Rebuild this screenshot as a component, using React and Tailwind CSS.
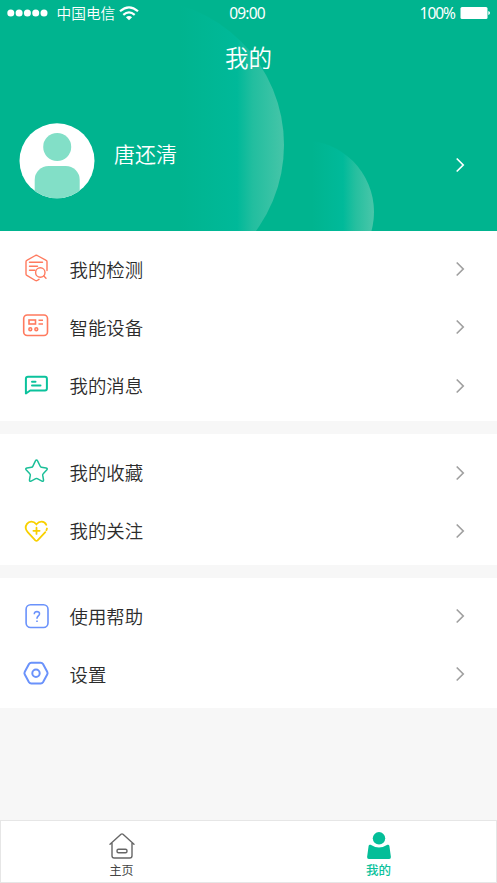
import React from "react";

const Chevron = ({ className }) => (
  <svg className={className} width="9" height="16" viewBox="0 0 9 16" fill="none" stroke="currentColor" strokeWidth="1.7">
    <path d="M.7 1.500 7.200 8 .7 14.500" />
  </svg>
);

const ReportIcon = () => (
  <svg width="28" height="30" viewBox="0 0 28 30" fill="none" stroke="#ff7a5e" strokeWidth="1.4" strokeLinecap="round" strokeLinejoin="round">
    <path d="M25 16.500V7.700q0-1-.8-1.400L15.200 1.500q-.9-.4-1.800 0L4.800 6.300Q4 6.700 4 7.700V20q0 1 .8 1.400l8.600 5.100q.9.500 1.800 0l1.800-1.200" />
    <path d="M7.500 8.200h13M7.500 12.200h8M7.500 16.200h5.500" />
    <circle cx="18.300" cy="18.500" r="4.700" />
    <path d="m21.800 22 2.200 2.200" />
  </svg>
);

const DeviceIcon = () => (
  <svg width="28" height="30" viewBox="0 0 28 30" fill="none" stroke="#ff7a5e" strokeWidth="1.600">
    <rect x="1.700" y="3" width="23.800" height="20.500" rx="3.500" />
    <rect x="7" y="8" width="6.500" height="4" />
    <path d="M16.500 8.300h4.500M16.500 12h4.500" />
    <circle cx="8.300" cy="17.200" r="1.400" />
    <circle cx="14.300" cy="17.200" r="1.400" />
  </svg>
);

const MessageIcon = () => (
  <svg width="28" height="30" viewBox="0 0 28 30" fill="none" stroke="#0bc29c" strokeWidth="2" strokeLinecap="round" strokeLinejoin="round">
    <path d="M6 5.800H23q1.900 0 1.900 1.900v9.900q0 1.900-1.900 1.900H8.200L3.900 22.500V7.700q0-1.900 2.100-1.900Z" />
    <path d="M10 10.700h3.500M10 14.500h8.500" />
  </svg>
);

const StarIcon = () => (
  <svg width="28" height="30" viewBox="0 0 28 30" fill="none" stroke="#1bbf98" strokeWidth="1.500" strokeLinejoin="round">
    <path d="M13.300 3.100q1.200-2 2.400 0l2.500 5.200q.4.800 1.200.9l4.700.8q2 .5.600 2l-3.500 3.700q-.6.600-.5 1.500l.8 4.700q.2 1.900-1.600 1.200l-4.600-2.400q-.8-.4-1.600 0l-4.600 2.400q-1.800.7-1.600-1.200l.8-4.700q.1-.9-.5-1.500L4.300 12q-1.400-1.500.6-2l4.700-.8q.8-.1 1.200-.9Z" />
  </svg>
);

const HeartIcon = () => (
  <svg width="28" height="30" viewBox="0 0 28 30" fill="none" stroke="#f8d000" strokeWidth="1.800" strokeLinecap="round">
    <path d="M24.300 8.800C22.300 4.700 17.300 4.800 14.500 8.300 11.300 4.900 7.200 4.900 5 7.900 2.900 10.900 3.700 13.900 5.700 16.100l7.600 8.300q1.200 1 2.300 0l7.700-8.200M24.400 14.200l.6-1.700M14.500 11.700v6.200M11.400 14.800h6.200" />
  </svg>
);

const HelpIcon = () => (
  <svg width="28" height="30" viewBox="0 0 28 30" fill="none" stroke="#6a92fb" strokeWidth="1.600">
    <rect x="4.100" y="3.800" width="21.900" height="22.700" rx="4.500" />
    <path d="M12.300 13.200C12.100 9.600 17.800 9.900 17.500 13c-.2 1.800-2.500 2.200-2.500 4.300v.4M15 19.500v1.600" />
  </svg>
);

const SettingsIcon = () => (
  <svg width="28" height="30" viewBox="0 0 28 30" fill="none" stroke="#6a92fb" strokeWidth="2" strokeLinejoin="round">
    <path d="M9.300 3.800h9.400q1.500 0 2.300 1.300l4.200 7.700q.8 1.400 0 2.800l-4.200 7.700q-.8 1.300-2.300 1.300H9.300q-1.500 0-2.300-1.300l-4.200-7.700q-.8-1.400 0-2.800l4.200-7.700q.8-1.300 2.300-1.300Z" />
    <circle cx="14" cy="14.200" r="3.700" />
  </svg>
);

const Row = ({ icon, label }) => (
  <div className="flex h-[58.300px] items-center pl-[22px] pr-[32px]">
    {icon}
    <span className="ml-[19.500px] flex-1 pt-px text-[18.400px] leading-[28px] font-[350] text-[#2b2b2b]">{label}</span>
    <Chevron className="text-[#a0a0a0]" />
  </div>
);

const StatusBar = () => (
  <div className="grid h-[26px] grid-cols-3 items-center text-[15.500px] leading-[26px]">
    <div className="flex items-center pl-[7px]">
      <svg width="42" height="8" viewBox="0 0 42 8" fill="white">
        <circle cx="3.800" cy="4" r="3.500" />
        <circle cx="12.100" cy="4" r="3.500" />
        <circle cx="20.400" cy="4" r="3.500" />
        <circle cx="28.700" cy="4" r="3.500" />
        <circle cx="37" cy="4" r="3.500" />
      </svg>
      <span className="ml-[7.500px] whitespace-nowrap text-[14.700px] font-[350]">中国电信</span>
      <svg className="ml-1 shrink-0" width="20" height="15" viewBox="0 0 20 15" fill="none" stroke="white" strokeWidth="2.200">
        <path d="M1 5.300Q10-2.700 19 5.300M4.300 8.800q5.700-5 11.400 0" />
        <path d="M6.900 11.200q3.100-2.500 6.200 0L10 14.300Z" fill="white" stroke="none" />
      </svg>
    </div>
    <span className="pr-[3px] text-center tracking-[-0.800px]">09:00</span>
    <div className="flex items-center justify-end pr-[6px]">
      <span className="tracking-[-1px]">100%</span>
      <svg className="ml-[5px]" width="31" height="12" viewBox="0 0 31 12" fill="white">
        <rect x="0.500" y="0" width="27" height="12" rx="1.500" />
        <path d="M28.300 4q1.700.3 1.700 2t-1.700 2Z" />
      </svg>
    </div>
  </div>
);

const Header = () => (
  <header className="relative h-[231px] overflow-hidden bg-[#00b48f] text-white">
    <svg className="absolute inset-0" width="497" height="231" viewBox="0 0 497 231">
      <defs>
        <linearGradient id="big" gradientUnits="userSpaceOnUse" x1="180" x2="284" y1="0" y2="0">
          <stop offset="0" stopColor="#00b999" stopOpacity="0" />
          <stop offset="0.550" stopColor="#00b999" />
          <stop offset="0.700" stopColor="#22be9f" />
          <stop offset="1" stopColor="#46c5a8" />
        </linearGradient>
        <linearGradient id="small" gradientUnits="userSpaceOnUse" x1="312" x2="374" y1="0" y2="0">
          <stop offset="0" stopColor="#00ba9a" stopOpacity="0" />
          <stop offset="0.500" stopColor="#00ba9a" />
          <stop offset="0.700" stopColor="#25bf9f" />
          <stop offset="1" stopColor="#49c6a9" />
        </linearGradient>
      </defs>
      <circle cx="138" cy="145" r="146" fill="url(#big)" />
      <circle cx="302" cy="212" r="72" fill="url(#small)" />
    </svg>
    <div className="relative">
      <StatusBar />
      <h1 className="mt-[14px] text-center text-[23.500px] leading-[36px] font-[350]">我的</h1>
      <div className="mt-[47px] flex pl-[19px] pr-[32px]">
        <svg width="76" height="76" viewBox="0 0 76 76">
          <clipPath id="avatar">
            <circle cx="38" cy="37.800" r="37.500" />
          </clipPath>
          <g clipPath="url(#avatar)">
            <rect width="76" height="76" fill="white" />
            <circle cx="38.200" cy="24" r="14" fill="#82dfc7" />
            <rect x="15.700" y="43" width="45" height="50" rx="14" fill="#82dfc7" />
          </g>
        </svg>
        <span className="ml-[19px] mt-[14px] flex-1 text-[21px] leading-[34px] font-[350]">唐还清</span>
        <Chevron className="mt-[34px]" />
      </div>
    </div>
  </header>
);

const TabBar = () => (
  <nav className="flex h-[63px] justify-center gap-[231px] border border-[#e6e6e6] bg-white pt-[11px] pl-[3px] text-[12px] leading-[20px]">
    <div className="flex w-[26px] flex-col items-center text-[#444]">
      <svg width="26" height="29" viewBox="0 0 26 29" fill="none" stroke="#666" strokeWidth="1.400" strokeLinecap="round" strokeLinejoin="round">
        <path d="M1 12.200 12 2.300q1-.8 2 0L25 12.200M3 11v12.700q0 2.300 2.300 2.300h15.400q2.300 0 2.300-2.300V11" />
        <rect x="8" y="17.300" width="10" height="3.500" rx="1.500" />
      </svg>
      <span className="whitespace-nowrap">主页</span>
    </div>
    <div className="flex w-[26px] flex-col items-center font-medium text-[#0bc29c]">
      <svg width="24" height="29" viewBox="0 0 24 29" fill="#04be98">
        <circle cx="12" cy="6.300" r="6.200" />
        <path d="M1.600 14q.3-1.700 2-1.200 8.400 5.500 16.800 0 1.700-.5 2 1.200l1.500 11.100q.1 1.900-1.700 1.900H1.800q-1.800 0-1.700-1.900Z" />
      </svg>
      <span className="whitespace-nowrap text-[12.500px]">我的</span>
    </div>
  </nav>
);

export default function App() {
  return (
    <div className="flex h-[883px] w-[497px] flex-col overflow-hidden bg-[#f7f7f7] font-['Noto_Sans','Noto_Sans_CJK_SC',sans-serif]">
      <Header />
      <main className="flex flex-1 flex-col gap-[13px]">
        <section className="h-[190px] bg-white pt-[9px]">
          <Row icon={<ReportIcon />} label="我的检测" />
          <Row icon={<DeviceIcon />} label="智能设备" />
          <Row icon={<MessageIcon />} label="我的消息" />
        </section>
        <section className="h-[131px] bg-white pt-[9.500px]">
          <Row icon={<StarIcon />} label="我的收藏" />
          <Row icon={<HeartIcon />} label="我的关注" />
        </section>
        <section className="h-[130px] bg-white pt-[9px]">
          <Row icon={<HelpIcon />} label="使用帮助" />
          <Row icon={<SettingsIcon />} label="设置" />
        </section>
      </main>
      <TabBar />
    </div>
  );
}
